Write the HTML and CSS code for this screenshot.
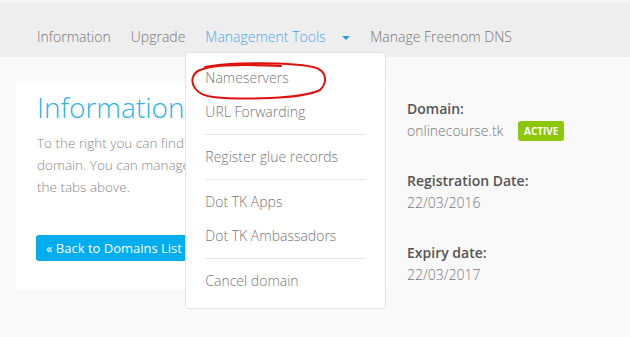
FILE: index.html
```html
<!DOCTYPE html>
<html lang="en">
<head>
  <meta charset="UTF-8" />
  <title>Domain Information</title>
  <link rel="stylesheet" href="styles.css">
</head>
<body>

  <header>
    <nav>
      <a href="#">Information</a>
      <a href="#">Upgrade</a>
      <div class="menu">
        <a href="#" class="active">Management Tools <span class="caret"></span></a>
        <ul class="dropdown">
          <li class="marked">
            <a href="#">Nameservers</a>
            <svg class="circle" width="140" height="38" viewBox="0 0 140 38">
              <path d="M16 5 C42 0 100 0 124 5 C138 8 139 20 131 28 C113 37 52 38 24 35 C5 33 2 21 4 15 C6 9 12 7 22 5 C42 2 70 3 92 4"
                    fill="none" stroke="#e0120f" stroke-width="2" stroke-linecap="round"/>
            </svg>
          </li>
          <li><a href="#">URL Forwarding</a></li>
          <li class="divider"></li>
          <li><a href="#">Register glue records</a></li>
          <li class="divider"></li>
          <li><a href="#">Dot TK Apps</a></li>
          <li><a href="#">Dot TK Ambassadors</a></li>
          <li class="divider"></li>
          <li><a href="#">Cancel domain</a></li>
        </ul>
      </div>
      <a href="#">Manage Freenom DNS</a>
    </nav>
  </header>

  <main class="container">
    <section class="card">
      <h1>Information</h1>
      <p>To the right you can find the details of your<br>domain. You can manage your domain using<br>the tabs above.</p>
      <a href="#" class="btn">&laquo; Back to Domains List</a>
    </section>

    <aside class="details">
      <div class="field">
        <div class="label">Domain:</div>
        <div class="value">onlinecourse.tk <span class="badge">ACTIVE</span></div>
      </div>
      <div class="field">
        <div class="label">Registration Date:</div>
        <div class="value">22/03/2016</div>
      </div>
      <div class="field">
        <div class="label">Expiry date:</div>
        <div class="value">22/03/2017</div>
      </div>
    </aside>
  </main>

</body>
</html>
```

FILE: styles.css
```css
* {
  box-sizing: border-box;
}
html, body {
  height: 100%;
}
body {
  font-family: "Open Sans", Arial, sans-serif;
  margin: 0;
  background-color: #f9f9f9;
  border-top: 3px solid #f6f6f6;
  overflow: hidden;
}
header {
  background-color: #eeeeee;
  height: 54px;
  padding-left: 37px;
}
nav {
  display: flex;
  align-items: center;
  height: 100%;
  gap: 20px;
  padding-top: 12px;
}
nav a {
  text-decoration: none;
  color: #777;
  font-size: 14px;
  font-weight: 300;
}
nav a.active {
  color: #4aa8e6;
}
.menu {
  position: relative;
}
.caret {
  display: inline-block;
  width: 0;
  height: 0;
  margin-left: 13px;
  vertical-align: middle;
  border-left: 4px solid transparent;
  border-right: 4px solid transparent;
  border-top: 4px solid #2a9ee2;
}
.dropdown {
  position: absolute;
  top: 27px;
  left: -20px;
  width: 201px;
  margin: 0;
  padding: 8px 0 10px;
  list-style: none;
  background: #fff;
  border: 1px solid #e3e3e3;
  border-radius: 4px;
  z-index: 5;
}
.dropdown li a {
  display: block;
  height: 34px;
  line-height: 34px;
  padding-left: 19px;
  color: #777;
}
.dropdown .divider {
  height: 1px;
  margin: 5px 19px 5px 19px;
  background: #e6e6e6;
}
.marked {
  position: relative;
}
.circle {
  position: absolute;
  left: 3px;
  top: 1px;
}
.container {
  display: flex;
  align-items: flex-start;
  padding: 24px 0 0 16px;
}
.card {
  width: 372px;
  height: 209px;
  background: #fff;
  border-radius: 3px;
  padding: 7px 21px 0;
}
.card h1 {
  margin: 0;
  font-size: 28px;
  font-weight: 300;
  color: #2cb2ee;
  line-height: 38px;
}
.card p {
  margin: 6px 0 37px;
  font-size: 13.5px;
  line-height: 22px;
  font-weight: 300;
  color: #8a8a8a;
}
.btn {
  display: inline-block;
  height: 26px;
  line-height: 26px;
  padding: 0 10px;
  margin-left: -1px;
  background: #00adef;
  color: #fff;
  font-size: 13px;
  text-decoration: none;
  border-radius: 3px;
}
.details {
  padding: 17px 0 0 19px;
}
.field {
  margin-bottom: 28px;
}
.label {
  font-size: 14px;
  font-weight: 600;
  color: #555;
  line-height: 22px;
}
.value {
  font-size: 14px;
  font-weight: 300;
  color: #777;
  line-height: 22px;
}
.badge {
  display: inline-block;
  margin-left: 11px;
  padding: 0 6px;
  height: 20px;
  line-height: 20px;
  font-size: 10px;
  font-weight: 700;
  color: #fff;
  background: #8cc70a;
  border-radius: 3px;
  vertical-align: 1px;
}
```
